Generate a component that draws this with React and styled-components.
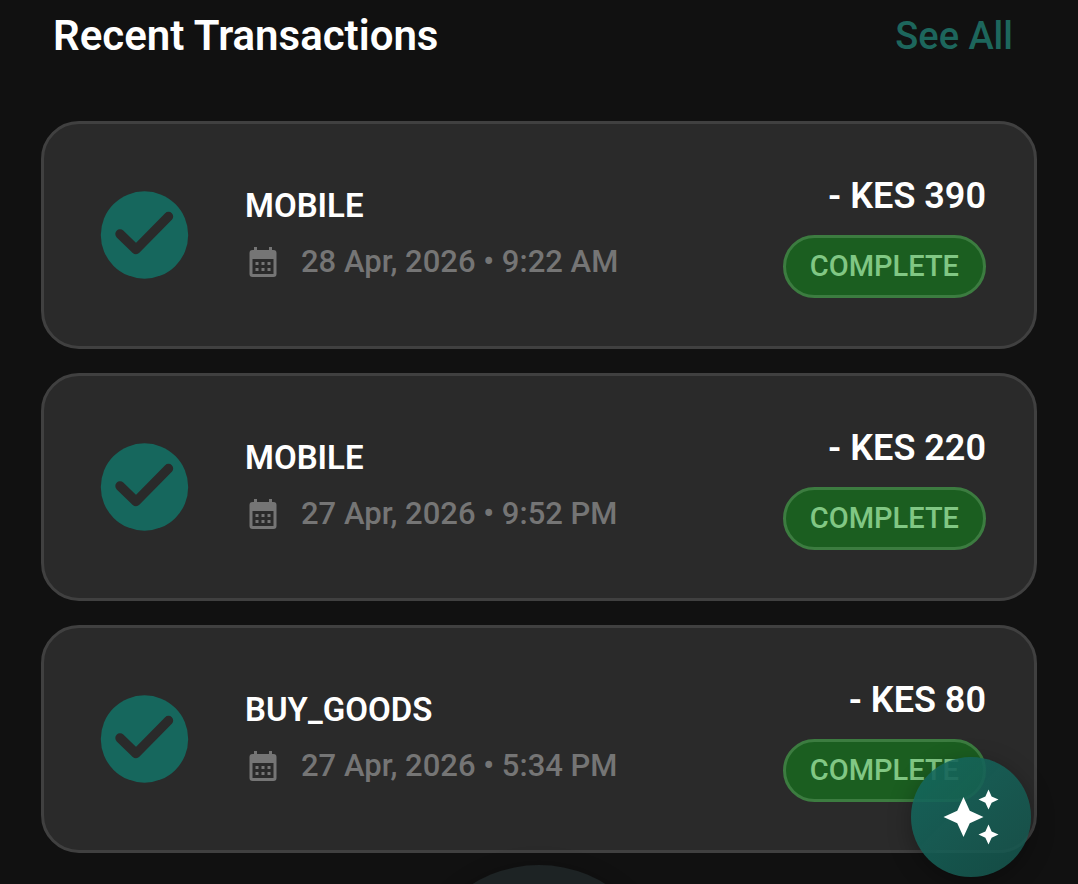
import React from 'react';
import styled, { createGlobalStyle } from 'styled-components';

const GlobalStyle = createGlobalStyle`
  body {
    margin: 0;
    background-color: #111111;
    color: #ffffff;
    font-family: Roboto, 'Liberation Sans', sans-serif;
    overflow: hidden;
  }
`;

const Page = styled.main`
  padding: 0 41px 31px;
`;

const Header = styled.header`
  display: flex;
  justify-content: space-between;
  align-items: center;
  padding: 12px 24px 61px 12px;
`;

const Title = styled.h1`
  margin: 0;
  font-size: 42px;
  font-weight: 600;
  line-height: 48px;
`;

const SeeAll = styled.a`
  color: #1d665c;
  font-size: 38px;
  font-weight: 500;
  line-height: 48px;
  text-decoration: none;
`;

const List = styled.ul`
  display: flex;
  flex-direction: column;
  gap: 24px;
  margin: 0;
  padding: 0;
  list-style: none;
`;

const Card = styled.li`
  display: flex;
  align-items: center;
  padding: 48px;
  border: 3px solid #404040;
  border-radius: 38px;
  background-color: #2a2a2a;
`;

const StatusIcon = styled.svg`
  flex-shrink: 0;
  width: 105px;
  height: 105px;
`;

const Details = styled.div`
  display: flex;
  flex: 1;
  flex-direction: column;
  gap: 14px;
  padding-left: 48px;
`;

const Name = styled.h2`
  margin: 0;
  font-size: 33px;
  font-weight: 600;
  line-height: 40px;
`;

const DateRow = styled.div`
  display: flex;
  align-items: center;
  gap: 20px;
  color: #757575;
`;

const CalendarIcon = styled.svg`
  width: 36px;
  height: 36px;
`;

const DateText = styled.time`
  font-size: 31px;
  font-weight: 500;
  line-height: 44px;
`;

const Summary = styled.div`
  display: flex;
  flex-direction: column;
  align-items: flex-end;
  gap: 15px;
`;

const Amount = styled.span`
  font-size: 36px;
  font-weight: 600;
  line-height: 48px;
`;

const Badge = styled.span`
  padding: 11px 24px;
  border: 3px solid #3c7c40;
  border-radius: 32px;
  background-color: #1b5e20;
  color: #81c784;
  font-size: 29px;
  font-weight: 500;
  line-height: 35px;
`;

const AssistantButton = styled.button`
  position: fixed;
  right: 47px;
  bottom: 7px;
  display: flex;
  align-items: center;
  justify-content: center;
  width: 120px;
  height: 120px;
  padding: 0;
  border: none;
  border-radius: 50%;
  background: linear-gradient(135deg, rgba(20, 104, 94, 0.9), rgba(22, 84, 76, 0.86));
  box-shadow: 0 6px 24px rgba(0, 0, 0, 0.3);
  color: #ffffff;
  cursor: pointer;
`;

const Glow = styled.div`
  position: fixed;
  left: 50%;
  bottom: -233px;
  width: 252px;
  height: 252px;
  margin-left: -126px;
  border-radius: 50%;
  background-color: #1d2324;
  box-shadow: 0 0 20px rgba(0, 0, 0, 0.2);
`;

const transactions = [
  { id: 1, name: 'MOBILE', date: '28 Apr, 2026 • 9:22 AM', amount: '- KES 390', status: 'COMPLETE' },
  { id: 2, name: 'MOBILE', date: '27 Apr, 2026 • 9:52 PM', amount: '- KES 220', status: 'COMPLETE' },
  { id: 3, name: 'BUY_GOODS', date: '27 Apr, 2026 • 5:34 PM', amount: '- KES 80', status: 'COMPLETE' },
];

function Transaction({ name, date, amount, status }) {
  return (
    <Card>
      <StatusIcon viewBox="0 0 105 105" aria-hidden="true">
        <circle cx="52.5" cy="52" r="43.7" fill="#16675d" />
        <path
          d="M28 51 L44 66.5 L76.5 33.5"
          fill="none"
          stroke="#2a2a2a"
          strokeWidth="9.4"
          strokeLinecap="round"
          strokeLinejoin="round"
        />
      </StatusIcon>
      <Details>
        <Name>{name}</Name>
        <DateRow>
          <CalendarIcon viewBox="0 -1 24 24" fill="currentColor" aria-hidden="true">
            <path
              fillRule="evenodd"
              d="M6 1h2v2h8V1h2v2h1a2 2 0 0 1 2 2v14a2 2 0 0 1-2 2H5a2 2 0 0 1-2-2V5a2 2 0 0 1 2-2h1zM5 9v10h14V9z"
            />
            <path d="M7 11h2v2H7zM11 11h2v2h-2zM15 11h2v2h-2zM7 15h2v2H7zM11 15h2v2h-2zM15 15h2v2h-2z" />
          </CalendarIcon>
          <DateText>{date}</DateText>
        </DateRow>
      </Details>
      <Summary>
        <Amount>{amount}</Amount>
        <Badge>{status}</Badge>
      </Summary>
    </Card>
  );
}

function App() {
  return (
    <>
      <GlobalStyle />
      <Page>
        <Header>
          <Title>Recent Transactions</Title>
          <SeeAll href="#all">See All</SeeAll>
        </Header>
        <List>
          {transactions.map((item) => (
            <Transaction key={item.id} {...item} />
          ))}
        </List>
      </Page>
      <Glow />
      <AssistantButton type="button" aria-label="Open assistant">
        <svg width="60" height="60" viewBox="0 0 24 24" fill="currentColor" aria-hidden="true">
          <path d="M19 9l1.25-2.75L23 5l-2.75-1.25L19 1l-1.25 2.75L15 5l2.75 1.25zM11.5 9.5L9 4 6.5 9.5 1 12l5.5 2.5L9 20l2.5-5.5L17 12zM19 15l-1.25 2.75L15 19l2.75 1.25L19 23l1.25-2.75L23 19l-2.75-1.25z" />
        </svg>
      </AssistantButton>
    </>
  );
}

export default App;
